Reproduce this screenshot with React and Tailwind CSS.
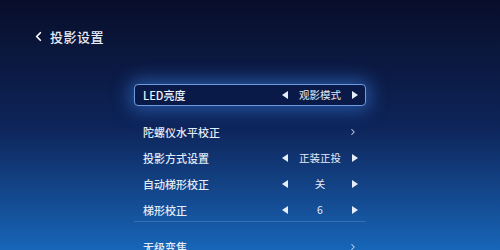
import { ChevronLeft, ChevronRight } from "lucide-react";

const ROWS = [
  { label: "陀螺仪水平校正", type: "link" },
  { label: "投影方式设置", type: "pick", value: "正装正投" },
  { label: "自动梯形校正", type: "pick", value: "关" },
  { label: "梯形校正", type: "pick", value: "6" },
];

function Tri({ dir }) {
  return (
    <svg width="6" height="8" viewBox="0 0 6 8" className="shrink-0">
      {dir === "left" ? <path d="M6 0 L0 4 L6 8 Z" fill="#e6eefa" /> : <path d="M0 0 L6 4 L0 8 Z" fill="#e6eefa" />}
    </svg>
  );
}

function Picker({ value }) {
  return (
    <div className="ml-auto flex items-center gap-[6px]">
      <Tri dir="left" />
      <div className="w-[52px] text-center text-[10.5px] text-[#e3ebf8]">{value}</div>
      <Tri dir="right" />
    </div>
  );
}

function Row({ row }) {
  return (
    <div className="h-[26px] flex items-center pl-[9px] pr-[8px]">
      <span className="text-[11px] font-medium text-[#e3ebf8]">{row.label}</span>
      {row.type === "pick" ? (
        <Picker value={row.value} />
      ) : (
        <ChevronRight size={10} strokeWidth={2.5} className="ml-auto text-[#c9d6ea]" />
      )}
    </div>
  );
}

export default function App() {
  return (
    <div
      className="w-[500px] h-[250px] overflow-hidden bg-gradient-to-b from-[#080e2a] via-[#0d2459] to-[#1766b8]"
      style={{ fontFamily: '"Noto Sans CJK SC", "Noto Sans", sans-serif' }}
    >
      <div className="flex items-center gap-[4px] pl-[31px] pt-[27px] h-[46px]">
        <ChevronLeft size={15} strokeWidth={2.75} className="text-white" />
        <span className="text-[13px] font-medium text-[#e8eef8] tracking-[0.5px]">投影设置</span>
      </div>

      <div className="ml-[134px] w-[232px] mt-[38px]">
        <div className="h-[22px] flex items-center pl-[8px] pr-[7px] rounded-[4px] border-[1.5px] border-[#6d9be0] bg-[#0a1a48] shadow-[0_0_18px_4px_rgba(60,130,230,0.55)]">
          <span className="text-[11px] font-medium text-[#eef3fb]">LED亮度</span>
          <Picker value="观影模式" />
        </div>

        <div className="mt-[13px]">
          {ROWS.map((r) => (
            <Row key={r.label} row={r} />
          ))}
        </div>
        <div className="h-px bg-[#4f86cf]/50 mt-[-2px]" />
        <div className="mt-[12px]">
          <Row row={{ label: "无级变焦", type: "link" }} />
        </div>
      </div>
    </div>
  );
}
